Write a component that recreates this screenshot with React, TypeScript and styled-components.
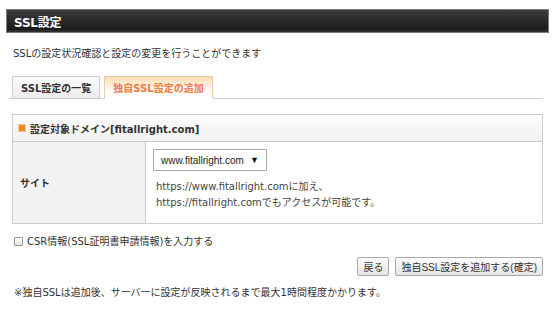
import styled, { createGlobalStyle } from "styled-components";

const GlobalStyle = createGlobalStyle`
	html, body {
		margin: 0;
		padding: 0;
		background: #fff;
	}
	body {
		font-family: "DejaVu Sans", "Noto Sans CJK JP", sans-serif;
		font-size: 10px;
		color: #333;
	}
`;

const App: React.FC = () => {
	return (
		<Page>
			<GlobalStyle />
			<TitleBar>SSL設定</TitleBar>
			<Content>
				<Lead>SSLの設定状況確認と設定の変更を行うことができます</Lead>
				<TabBar>
					<Tab>SSL設定の一覧</Tab>
					<Tab $active>独自SSL設定の追加</Tab>
				</TabBar>
				<Box>
					<BoxHead>
						<HeadMark />
						設定対象ドメイン[fitallright.com]
					</BoxHead>
					<BoxRow>
						<RowLabel>サイト</RowLabel>
						<RowBody>
							<FakeSelect>
								<span>www.fitallright.com</span>
								<Arrow>▼</Arrow>
							</FakeSelect>
							<Hint>
								https://www.fitallright.comに加え、
								<br />
								https://fitallright.comでもアクセスが可能です。
							</Hint>
						</RowBody>
					</BoxRow>
				</Box>
				<CheckLine>
					<CheckBox />
					CSR情報(SSL証明書申請情報)を入力する
				</CheckLine>
				<Actions>
					<Button>戻る</Button>
					<Button>独自SSL設定を追加する(確定)</Button>
				</Actions>
				<Note>※独自SSLは追加後、サーバーに設定が反映されるまで最大1時間程度かかります。</Note>
			</Content>
		</Page>
	);
};

export default App;

const Page = styled.div`
	padding: 9px 6px 0;
`;

const TitleBar = styled.div`
	height: 22px;
	display: flex;
	align-items: center;
	padding-left: 7px;
	border: 1px solid #7a7a7a;
	background: linear-gradient(#3c3c3c, #262626 60%, #181818);
	box-shadow: inset 0 -3px 0 -1px rgba(80, 80, 80, 0.35);
	color: #fff;
	font-size: 12px;
	font-weight: bold;
	letter-spacing: -0.2px;
`;

const Content = styled.div`
	padding: 0 6px;
`;

const Lead = styled.p`
	margin: 14px 0 0 1px;
	line-height: 13px;
`;

const TabBar = styled.div`
	display: flex;
	gap: 4px;
	margin: 16px 0 0 -3px;
	padding-left: 3px;
	border-bottom: 1px solid #ccc;
`;

const Tab = styled.div<{ $active?: boolean }>`
	height: 21px;
	display: flex;
	align-items: center;
	padding: 0 8px;
	margin-bottom: -1px;
	border: 1px solid ${(p) => (p.$active ? "#e6cdb0" : "#ccc")};
	border-bottom: 1px solid ${(p) => (p.$active ? "#fff" : "#ccc")};
	background: ${(p) =>
		p.$active
			? "linear-gradient(#fddcb3, #fff 75%)"
			: "linear-gradient(#fbfbfb, #ececec)"};
	color: ${(p) => (p.$active ? "#f07b3f" : "#333")};
	font-weight: bold;
`;

const Box = styled.div`
	margin-top: 15px;
	border: 1px solid #ccc;
`;

const BoxHead = styled.div`
	height: 26px;
	display: flex;
	align-items: center;
	gap: 5px;
	padding-left: 6px;
	border-bottom: 1px solid #ccc;
	background: linear-gradient(#fdfdfd, #f1f1f1);
	font-weight: bold;
`;

const HeadMark = styled.span`
	width: 6px;
	height: 6px;
	background: #f08a22;
	box-shadow: 0 0 0 1px #f8c68e;
`;

const BoxRow = styled.div`
	display: flex;
`;

const RowLabel = styled.div`
	width: 125px;
	flex: none;
	display: flex;
	align-items: center;
	padding-left: 7px;
	background: #f2f2f2;
	border-right: 1px solid #ccc;
	font-weight: bold;
`;

const RowBody = styled.div`
	flex: 1;
	padding: 7px 0 12px 7px;
`;

const FakeSelect = styled.div`
	width: 98px;
	height: 20px;
	display: flex;
	align-items: center;
	justify-content: space-between;
	padding: 0 7px 0 7px;
	border: 1px solid #aaa;
	border-radius: 1px;
	background: #fff;
	font-family: "Liberation Sans", "Noto Sans CJK JP", sans-serif;
	font-size: 10px;
	color: #222;
`;

const Arrow = styled.span`
	font-size: 9px;
	color: #111;
`;

const Hint = styled.p`
	margin: 8px 0 0 3px;
	line-height: 16px;
	color: #444;
`;

const CheckLine = styled.div`
	display: flex;
	align-items: center;
	gap: 4px;
	margin: 11px 0 0 2px;
	line-height: 13px;
`;

const CheckBox = styled.span`
	width: 7px;
	height: 7px;
	border: 1px solid #999;
	border-radius: 1px;
	background: linear-gradient(#fdfdfd, #e4e4e4);
`;

const Actions = styled.div`
	display: flex;
	justify-content: flex-end;
	gap: 6px;
	margin-top: 9px;
`;

const Button = styled.button`
	height: 19px;
	padding: 0 5px;
	border: 1px solid #a9a9a9;
	border-radius: 2px;
	background: linear-gradient(#fdfdfd, #e5e5e5);
	font-family: "Liberation Sans", "Noto Sans CJK JP", sans-serif;
	font-size: 10px;
	color: #333;
`;

const Note = styled.p`
	margin: 10px 0 0 2px;
	line-height: 13px;
`;
